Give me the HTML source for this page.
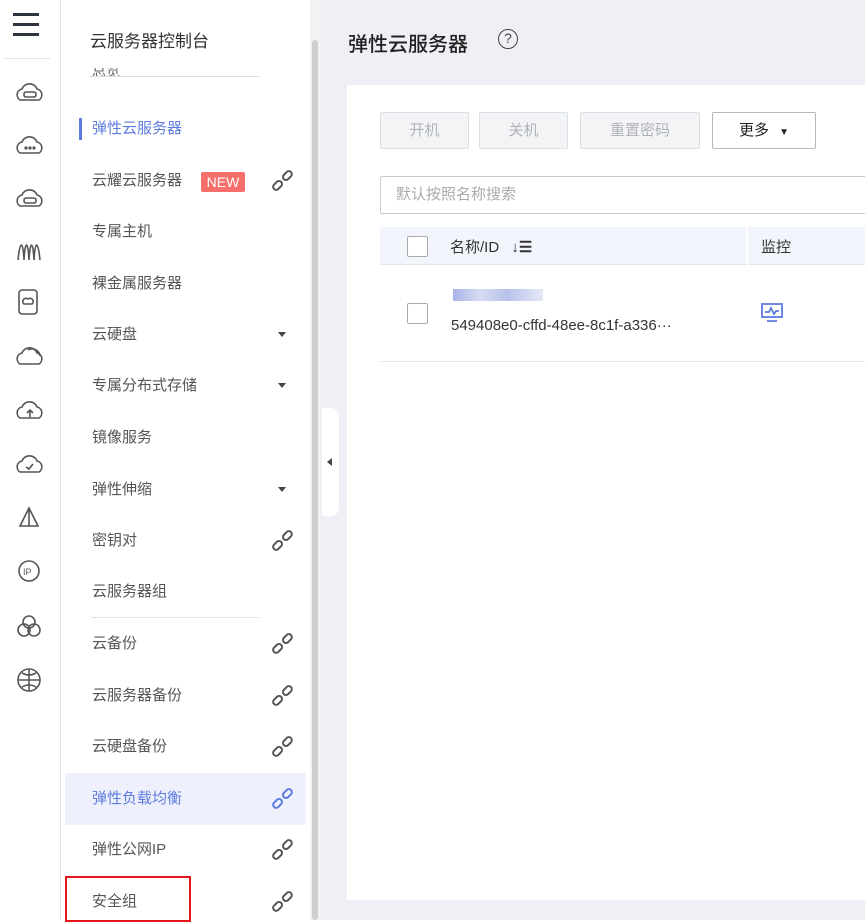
<!DOCTYPE html>
<html><head><meta charset="utf-8"><style>
*{margin:0;padding:0;box-sizing:border-box}
body{width:865px;height:920px;overflow:hidden;background:#fff;font-family:"Liberation Sans","Noto Sans CJK SC",sans-serif;position:relative;color:#333}
.abs{position:absolute}
.iconbar{left:0;top:0;width:61px;height:920px;background:#fff;border-right:1px solid #e3e5ea}
.nav{left:62px;top:0;width:248px;height:920px;background:#fff}
.item{position:absolute;left:30px;font-size:15px;color:#555;line-height:20px}
.caret{position:absolute;left:216px;width:0;height:0;border-left:4px solid transparent;border-right:4px solid transparent;border-top:5px solid #444}
.main{left:320px;top:0;width:545px;height:920px;background:#eef0f5}
.btn{position:absolute;top:112px;height:37px;border:1px solid #dcdfe6;background:#f3f4f6;color:#b0b3b9;font-size:15px;text-align:center;line-height:35px;border-radius:2px}
</style></head><body>
<div class="abs iconbar">
 <div class="abs" style="left:13px;top:13px;width:26px;height:3px;background:#2d3340"></div>
 <div class="abs" style="left:13px;top:23px;width:26px;height:3px;background:#2d3340"></div>
 <div class="abs" style="left:13px;top:33px;width:26px;height:3px;background:#2d3340"></div>
 <div class="abs" style="left:3px;top:58px;width:47px;height:1px;background:#e3e5ea"></div>
 <svg class="abs" style="left:0;top:70px" width="60" height="640" fill="none" stroke="#555" stroke-width="1.6">
  <g transform="translate(16,10)"><path d="M4 20a6 6 0 0 1 2-11a8 8 0 0 1 15 0a6 6 0 0 1 2 11z"/><rect x="8" y="12" width="12" height="5" rx="2"/></g>
  <g transform="translate(16,63)"><path d="M4 20a6 6 0 0 1 2-11a8 8 0 0 1 15 0a6 6 0 0 1 2 11z"/><circle cx="10" cy="15" r="0.8"/><circle cx="14" cy="15" r="0.8"/><circle cx="18" cy="15" r="0.8"/></g>
  <g transform="translate(16,116)"><path d="M4 20a6 6 0 0 1 2-11a8 8 0 0 1 15 0a6 6 0 0 1 2 11z"/><rect x="8" y="12" width="12" height="5" rx="2"/></g>
  <g transform="translate(16,168)"><path d="M2 22c2-20 5-20 6 0c1-20 4-20 5 0c1-20 4-20 5 0c1-20 4-20 6 0"/></g>
  <g transform="translate(19,220)"><rect x="0" y="0" width="18" height="24" rx="3"/><path d="M5 14a3 3 0 0 1 4-5a3 3 0 0 1 4 5z"/></g>
  <g transform="translate(16,274)"><path d="M4 20a6 6 0 0 1 2-11a8 8 0 0 1 15 0a6 6 0 0 1 2 11z"/><path d="M12 6a8 8 0 0 1 12 6"/></g>
  <g transform="translate(16,328)"><path d="M4 20a6 6 0 0 1 2-11a8 8 0 0 1 15 0a6 6 0 0 1 2 11z"/><path d="M14 19v-7M11 15l3-3 3 3"/></g>
  <g transform="translate(16,382)"><path d="M4 20a6 6 0 0 1 2-11a8 8 0 0 1 15 0a6 6 0 0 1 2 11z"/><path d="M10 15l3 2 4-5"/></g>
  <g transform="translate(16,436)"><path d="M13 2L4 20h18zM13 2v18"/></g>
  <g transform="translate(18,490)"><circle cx="11" cy="11" r="10"/><text x="5" y="15" font-size="9" fill="#555" stroke="none" font-family="Liberation Sans">IP</text></g>
  <g transform="translate(17,545)"><circle cx="12" cy="7" r="6"/><circle cx="7" cy="15" r="6"/><circle cx="17" cy="15" r="6"/></g>
  <g transform="translate(17,598)"><circle cx="12" cy="12" r="11"/><path d="M1 12h22M12 1v22M5 5q7 4 14 0M5 19q7-4 14 0"/></g>
 </svg>
</div>
<div class="abs nav">
 <div class="abs" style="left:28px;top:27px;font-size:17px;color:#333">云服务器控制台</div>
 <div class="abs" style="left:30px;top:68px;font-size:14px;color:#666;height:9px;overflow:hidden;line-height:6px">总览</div>
 <div class="abs" style="left:28px;top:76px;width:170px;height:1px;background:#dcdde0"></div>
 <div class="abs" style="left:17px;top:118px;width:3px;height:22px;background:#5e7ce0"></div>
 <div class="item" style="top:119px;color:#5e7ce0">弹性云服务器</div>
 <div class="item" style="top:171px">云耀云服务器</div>
 <div class="abs" style="left:139px;top:172px;width:44px;height:20px;background:#f66f6a;color:#fff;font-size:14px;line-height:20px;text-align:center;border-radius:2px">NEW</div>
 <div class="item" style="top:222px">专属主机</div>
 <div class="item" style="top:274px">裸金属服务器</div>
 <div class="item" style="top:325px">云硬盘</div><div class="caret" style="top:332px"></div>
 <div class="item" style="top:376px">专属分布式存储</div><div class="caret" style="top:383px"></div>
 <div class="item" style="top:428px">镜像服务</div>
 <div class="item" style="top:480px">弹性伸缩</div><div class="caret" style="top:487px"></div>
 <div class="item" style="top:531px">密钥对</div>
 <div class="item" style="top:582px">云服务器组</div>
 <div class="abs" style="left:30px;top:617px;width:168px;border-top:1px dotted #ccc"></div>
 <div class="item" style="top:634px">云备份</div>
 <div class="item" style="top:686px">云服务器备份</div>
 <div class="item" style="top:737px">云硬盘备份</div>
 <div class="abs" style="left:3px;top:773px;width:241px;height:52px;background:#eef1fb"></div>
 <div class="item" style="top:789px;color:#5e7ce0">弹性负载均衡</div>
 <div class="item" style="top:840px">弹性公网IP</div>
 <div class="item" style="top:892px">安全组</div>
 <div class="abs" style="left:3px;top:876px;width:126px;height:46px;border:2px solid #e8141c"></div>
 <svg class="abs" style="left:0;top:0" width="248" height="920" fill="none" stroke="#555" stroke-width="2">
  <defs><g id="lk"><rect x="-3" y="-7" width="6" height="10" rx="3" transform="translate(12 5) rotate(45)"/><rect x="-3" y="-3" width="6" height="10" rx="3" transform="translate(5 12) rotate(45)"/></g></defs>
  <use href="#lk" x="212" y="172"/><use href="#lk" x="212" y="532"/><use href="#lk" x="212" y="635"/><use href="#lk" x="212" y="687"/><use href="#lk" x="212" y="738"/><use href="#lk" x="212" y="790" stroke="#5e7ce0"/><use href="#lk" x="212" y="841"/><use href="#lk" x="212" y="893"/>
 </svg>
</div>
<div class="abs" style="left:310px;top:0;width:10px;height:920px;background:#f3f3f3"></div>
<div class="abs" style="left:312px;top:40px;width:6px;height:880px;background:#cfcfcf;border-radius:3px"></div>
<div class="abs main">
 <div class="abs" style="left:28px;top:28px;font-size:20px;color:#222;font-weight:500">弹性云服务器</div>
 <div class="abs" style="left:178px;top:29px;width:20px;height:20px;border:1.6px solid #444;border-radius:50%;font-size:14px;text-align:center;line-height:17px;color:#444">?</div>
 <div class="abs" style="left:2px;top:408px;width:17px;height:108px;background:#fff;border-radius:0 8px 8px 0"></div>
 <div class="abs" style="left:7px;top:458px;border-top:4px solid transparent;border-bottom:4px solid transparent;border-right:5px solid #444"></div>
 <div class="abs" style="left:27px;top:85px;width:520px;height:815px;background:#fff">
  <div class="btn" style="left:33px;top:27px;width:89px">开机</div>
  <div class="btn" style="left:132px;top:27px;width:89px">关机</div>
  <div class="btn" style="left:233px;top:27px;width:120px">重置密码</div>
  <div class="btn" style="left:365px;top:27px;width:104px;background:#fff;border-color:#b7b9be;color:#222">更多 <span style="font-size:10px;margin-left:6px">▼</span></div>
  <div class="abs" style="left:33px;top:91px;width:500px;height:38px;border:1px solid #c9cbd0;border-radius:2px;font-size:15px;color:#aaa;line-height:36px;padding-left:15px">默认按照名称搜索</div>
  <div class="abs" style="left:33px;top:142px;width:500px;height:38px;background:#f2f5fc;border-bottom:1px solid #e3e5ea"></div>
  <div class="abs" style="left:399px;top:142px;width:2px;height:38px;background:#fff"></div>
  <div class="abs" style="left:60px;top:151px;width:21px;height:21px;border:1.5px solid #aaa;border-radius:2px;background:#fff"></div>
  <div class="abs" style="left:103px;top:151px;font-size:15px;color:#333">名称/ID <span style="margin-left:8px;font-weight:bold">↓☰</span></div>
  <div class="abs" style="left:414px;top:151px;font-size:15px;color:#333">监控</div>
  <div class="abs" style="left:60px;top:218px;width:21px;height:21px;border:1.5px solid #aaa;border-radius:2px"></div>
  <div class="abs" style="left:106px;top:204px;width:90px;height:12px;background:linear-gradient(90deg,#a8b4e6,#d7dcf3 30%,#b8c2ea 60%,#e6e9f7)"></div>
  <div class="abs" style="left:104px;top:232px;font-size:15px;color:#333">549408e0-cffd-48ee-8c1f-a336···</div>
  <svg class="abs" style="left:414px;top:218px" width="22" height="20" fill="none" stroke="#5e7ce0" stroke-width="1.8"><rect x="1" y="1" width="20" height="13"/><path d="M4 9h4l2-4 3 6 2-3h3M6 18h10"/></svg>
  <div class="abs" style="left:33px;top:276px;width:500px;height:1px;background:#e3e5ea"></div>
 </div>
</div>
</body></html>
